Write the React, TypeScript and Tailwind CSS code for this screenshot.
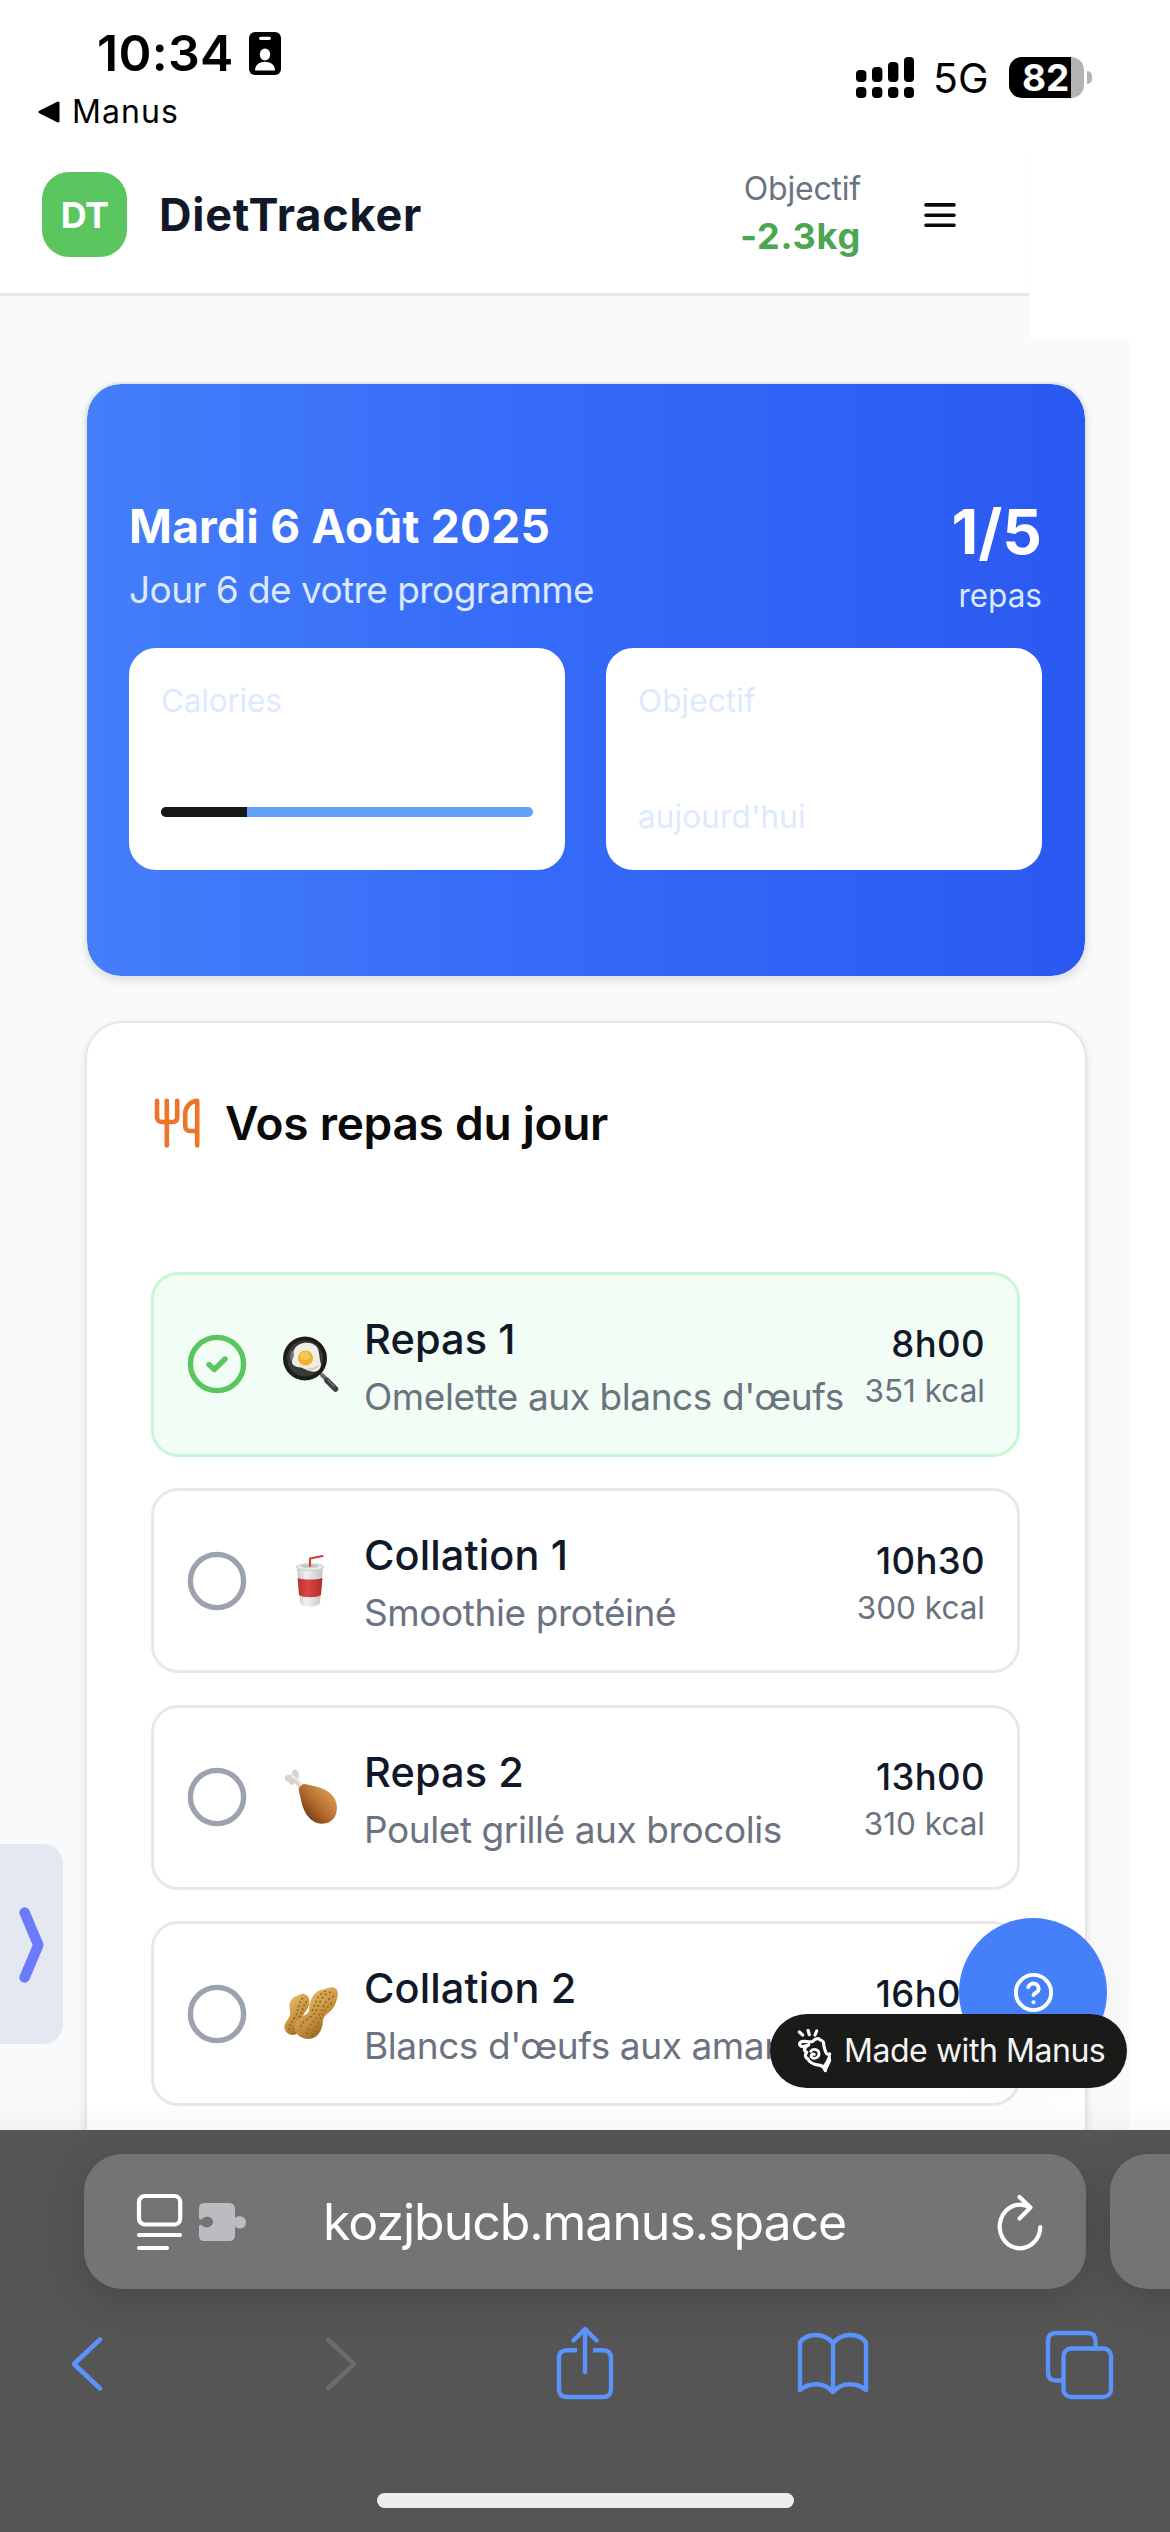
import React from "react";

function FriedEgg() {
  return (
    <svg viewBox="0 0 56 56" className="h-[56px] w-[56px]">
      <path d="M39 39 L44 44" stroke="#6b6b6b" strokeWidth="4" strokeLinecap="round" />
      <path d="M44 44.5 L52.5 53" stroke="#3f3f41" strokeWidth="5.5" strokeLinecap="round" />
      <path d="M45 44 L51 50.5" stroke="#77777a" strokeWidth="1.4" strokeLinecap="round" />
      <circle cx="22" cy="22.5" r="22" fill="#1c1c1c" />
      <circle cx="22" cy="22.5" r="18" fill="#3a3a3a" />
      <path d="M8 16 C6 22 8 26 12 28 L14 12Z" fill="#7c7478" />
      <path d="M11 14 C15 5 29 5 34 11 C37 17 36 22 38 28 C38 35 32 37 27 35 C22 34 20 31 14 31 C7 28 9 25 10 22 C12 19 10 18 11 14Z" fill="#eeeee2" />
      <path d="M13 28 C18 31 28 36 36 28 C34 35 28 35 24 33Z" fill="#cfd0c0" />
      <circle cx="22.5" cy="22" r="7.6" fill="#f0b031" />
      <ellipse cx="22" cy="20" rx="5" ry="4" fill="#f8c956" />
    </svg>
  );
}

function Cup() {
  return (
    <svg viewBox="0 0 56 56" className="h-[56px] w-[56px]">
      <defs>
        <linearGradient id="cupBody" x1="0" x2="1">
          <stop offset="0" stopColor="#c9c9c9" />
          <stop offset="0.35" stopColor="#f1f1f1" />
          <stop offset="1" stopColor="#c4c4c4" />
        </linearGradient>
        <linearGradient id="cupBand" x1="0" x2="1">
          <stop offset="0" stopColor="#b93230" />
          <stop offset="0.4" stopColor="#dd4541" />
          <stop offset="1" stopColor="#b22d2b" />
        </linearGradient>
      </defs>
      <path d="M14 15 L17 50 C17 54.5 37 54.5 37 50 L40 15Z" fill="url(#cupBody)" />
      <path d="M14.6 25 C20 27 34 27 39.4 25 L38 42 C34 45 20 45 16 42Z" fill="url(#cupBand)" />
      <ellipse cx="27" cy="14" rx="13.8" ry="3.4" fill="#e9e9e9" stroke="#cfcfcf" strokeWidth="1" />
      <ellipse cx="27" cy="13" rx="9" ry="1.8" fill="#c2c2c2" />
      <path d="M27 13 V5.5 L39.5 3" fill="none" stroke="#cf3a38" strokeWidth="2" strokeLinecap="round" strokeLinejoin="round" />
    </svg>
  );
}

function Drumstick() {
  return (
    <svg viewBox="0 0 56 56" className="h-[56px] w-[56px]">
      <defs>
        <linearGradient id="meat" x1="0.15" y1="0.85" x2="0.85" y2="0.2">
          <stop offset="0" stopColor="#6b3411" />
          <stop offset="0.45" stopColor="#b3692c" />
          <stop offset="1" stopColor="#d89a55" />
        </linearGradient>
      </defs>
      <path d="M2 8 C3 5 7 6 9 6 C8 2 11 0 13 1 C17 2 16 7 15 10 L21 16 L17 20 L12 14 C9 17 6 16 6 13 C3 12 1 11 2 8Z" fill="#d9d2c8" />
      <path d="M9 7 C12 8 14 11 19 16" fill="none" stroke="#f0ece5" strokeWidth="2" strokeLinecap="round" />
      <path d="M22 15 C30 17 41 18 48 25 C54 31 55 38 53 45 C50 54 41 56 34 54 C25 51 20 41 18 31 C17 25 15 21 16 19 C18 17 19 15 22 15Z" fill="url(#meat)" />
    </svg>
  );
}

function Peanuts() {
  return (
    <svg viewBox="0 0 56 56" className="h-[56px] w-[56px]">
      <defs>
        <linearGradient id="nut" x1="0.2" y1="0" x2="0.8" y2="1">
          <stop offset="0" stopColor="#ecc56f" />
          <stop offset="0.6" stopColor="#c28d3b" />
          <stop offset="1" stopColor="#7d5117" />
        </linearGradient>
      </defs>
      <path d="M21 8 C26 9 27 14 26 19 C25 24 20 27 19 33 C19 41 17 49 9 49 C3 48 0 43 2 38 C4 33 8 32 7 25 C5 18 8 11 14 10 C17 9 18 7 21 8Z" fill="url(#nut)" />
      <path d="M20 12 C14 18 16 25 12 31 C9 36 6 38 6 44 M24 15 C19 21 20 25 16 32 C13 38 11 41 11 46" fill="none" stroke="#8d6223" strokeWidth="1.6" strokeDasharray="2 2.2" />
      <path d="M52 2 C57 5 54 14 52 19 C48 27 42 27 40 34 C40 42 36 53 25 53 C15 52 9 45 12 37 C15 30 23 31 26 25 C26 15 30 6 38 4 C44 3 48 0 52 2Z" fill="url(#nut)" />
      <path d="M48 6 C37 9 36 20 32 27 C27 33 18 34 17 44 M51 10 C41 14 41 22 36 29 C31 36 25 39 23 49 M43 5 C33 9 33 18 29 25 M49 17 C42 23 41 27 37 33 C34 40 31 44 29 50" fill="none" stroke="#956a26" strokeWidth="1.7" strokeDasharray="2.2 2.4" />
    </svg>
  );
}

type Meal = {
  icon: React.ReactNode;
  title: string;
  description: string;
  time: string;
  kcal: string;
  done?: boolean;
};

const meals: Meal[] = [
  { icon: <FriedEgg />, title: "Repas 1", description: "Omelette aux blancs d'œufs", time: "8h00", kcal: "351 kcal", done: true },
  { icon: <Cup />, title: "Collation 1", description: "Smoothie protéiné", time: "10h30", kcal: "300 kcal" },
  { icon: <Drumstick />, title: "Repas 2", description: "Poulet grillé aux brocolis", time: "13h00", kcal: "310 kcal" },
  { icon: <Peanuts />, title: "Collation 2", description: "Blancs d'œufs aux amandes", time: "16h00", kcal: "" },
];

function StatusCircle({ done }: { done?: boolean }) {
  return (
    <svg viewBox="0 0 60 60" className="h-[60px] w-[60px] shrink-0" fill="none" strokeLinecap="round" strokeLinejoin="round">
      <circle cx="30" cy="30" r="26.6" stroke={done ? "#5bc65f" : "#9ca3af"} strokeWidth="5.4" />
      {done && <path d="M22 30.5 L27.3 35.5 L38 25" stroke="#5bc65f" strokeWidth="5.4" />}
    </svg>
  );
}

function MealRow({ meal }: { meal: Meal }) {
  return (
    <div
      className={
        "flex h-[185px] items-center rounded-[27px] border-[3px] pl-[33px] pr-[32px] " +
        (meal.done ? "border-[#c8f7d6] bg-[#f2fdf5]" : "border-[#e8e8ec] bg-white")
      }
    >
      <StatusCircle done={meal.done} />
      <div className="ml-[36px] shrink-0">{meal.icon}</div>
      <div className="ml-[25px] min-w-0 flex-1 whitespace-nowrap">
        <p className="text-[41.5px] leading-[64px] font-medium tracking-[0.1px] text-[#111827]">{meal.title}</p>
        <p className="text-[37px] leading-[51px] tracking-[-0.42px] text-[#6b7280]">{meal.description}</p>
      </div>
      <div className="shrink-0 pt-[2px] text-right whitespace-nowrap">
        <p className="text-[36.5px] leading-[52px] font-medium tracking-[0.4px] text-[#111827]">{meal.time}</p>
        <p className="h-[42px] text-[31.5px] leading-[42px] tracking-[0px] text-[#6b7280]">{meal.kcal}</p>
      </div>
    </div>
  );
}

function StatusBar() {
  return (
    <div className="flex h-[154px] justify-between">
      <div className="flex flex-col">
        <div className="mt-[22px] flex h-[62px] items-center pl-[97px]">
          <span className="w-[152px] text-[50px] leading-[62px] font-semibold tracking-[0.3px] text-black">10:34</span>
          <svg viewBox="0 0 33 43" className="h-[43px] w-[33px]">
            <rect width="32" height="43" rx="6" fill="#000" />
            <rect x="10" y="4.7" width="12" height="3.2" rx="1.6" fill="#fff" />
            <ellipse cx="16" cy="22.5" rx="5.2" ry="6" fill="#fff" />
            <path d="M6 38.5 C6 32.5 11 29.8 16 29.8 S26 32.5 26 38.5Z" fill="#fff" />
          </svg>
        </div>
        <div className="mt-[6px] flex h-[44px] items-center pl-[37px]">
          <svg viewBox="0 0 24 24" className="h-[24px] w-[24px]">
            <path d="M3 12 L21 3 V21Z" fill="#000" stroke="#000" strokeWidth="3" strokeLinejoin="round" />
          </svg>
          <span className="ml-[11px] text-[32px] leading-[44px] tracking-[1.07px] text-black">Manus</span>
        </div>
      </div>
      <div className="mt-[57px] flex h-[41px] items-center pr-[78px]">
        <svg viewBox="0 0 58 41" className="h-[41px] w-[58px]" fill="#000">
          <rect x="0" y="13" width="10.4" height="12" rx="4" />
          <rect x="16" y="10" width="10.4" height="15" rx="4" />
          <rect x="32" y="5" width="10.4" height="20" rx="4" />
          <rect x="48" y="0" width="10" height="25" rx="4" />
          <rect x="0" y="30" width="10.4" height="11" rx="4" />
          <rect x="16" y="30" width="10.4" height="11" rx="4" />
          <rect x="32" y="30" width="10.4" height="11" rx="4" />
          <rect x="48" y="30" width="10" height="11" rx="4" />
        </svg>
        <span className="ml-[19px] w-[76px] pt-[2px] text-[41px] leading-[41px] text-black">5G</span>
        <div className="h-[41px] w-[75px] rounded-[13px] bg-linear-to-r from-black from-[62px] to-[#b3b3b3] to-[62px] pl-[13px] text-[37px] leading-[41px] font-bold text-white">
          82
        </div>
        <div className="ml-[3px] h-[13px] w-[5px] rounded-r-full bg-[#b3b3b3]" />
      </div>
    </div>
  );
}

function AppHeader() {
  return (
    <header className="flex h-[142px] w-[1030px] items-center border-r border-b-[3px] border-r-[#fafafa] border-b-[#e5e7eb] pb-[18px] pl-[42px]">
      <div className="flex h-[85px] w-[85px] items-center justify-center rounded-[27px] bg-[#5bc65f] text-[36px] font-bold tracking-[-0.8px] text-white">
        DT
      </div>
      <h1 className="ml-[32px] text-[45px] leading-[60px] font-bold tracking-[0.78px] text-[#111827]">DietTracker</h1>
      <div className="ml-auto text-right">
        <p className="text-[32px] leading-[43px] tracking-[-0.2px] text-[#6b7280]">Objectif</p>
        <p className="text-[36px] leading-[52px] font-bold tracking-[0.8px] text-[#4aa74f]">-2.3kg</p>
      </div>
      <svg viewBox="0 0 32 24" className="mr-[73px] ml-[63px] h-[24px] w-[32px]" stroke="#0a0a0a" strokeWidth="3.6" strokeLinecap="round">
        <path d="M2 1.9 H30 M2 12.3 H30 M2 22.2 H30" />
      </svg>
    </header>
  );
}

function SummaryCard() {
  return (
    <section className="h-[596px] rounded-[36px] border-2 border-[#e5e5e5] bg-linear-to-r from-[#447ef9] via-[#366af8] via-45% to-[#2a59f1] bg-clip-padding pt-[109px] pr-[43px] pl-[42px] shadow-[0_3px_8px_rgba(0,0,0,0.1)]">
      <div className="flex h-[128px] justify-between">
        <div>
          <h2 className="text-[46px] leading-[66px] font-bold tracking-[0.27px] text-white">Mardi 6 Août 2025</h2>
          <p className="text-[37px] leading-[62px] tracking-[-0.56px] text-[#dbe8fe]">Jour 6 de votre programme</p>
        </div>
        <div className="text-right">
          <p className="text-[62px] leading-[78px] font-bold text-white">1/5</p>
          <p className="text-[31.5px] leading-[50px] text-[#dbe8fe]">repas</p>
        </div>
      </div>
      <div className="mt-[27px] grid grid-cols-2 gap-[41px]">
        <div className="flex h-[222px] flex-col rounded-[27px] bg-white px-[32px] pt-[31px]">
          <p className="text-[31.5px] leading-[43px] tracking-[-0.2px] text-[#dde9fd]">Calories</p>
          <div className="mt-[85px] h-[10px] overflow-hidden rounded-full bg-[#62a0f9]">
            <div className="h-full w-[23%] bg-[#171717]" />
          </div>
        </div>
        <div className="flex h-[222px] flex-col rounded-[27px] bg-white px-[32px] pt-[31px]">
          <p className="text-[31.5px] leading-[43px] tracking-[0.1px] text-[#dde9fd]">Objectif</p>
          <p className="mt-[73px] text-[31.5px] leading-[43px] tracking-[0.12px] text-[#dde9fd]">aujourd'hui</p>
        </div>
      </div>
    </section>
  );
}

function MealsCard() {
  return (
    <section className="mt-[43px] h-[1250px] rounded-[38px] border-2 border-[#e5e5e5] bg-white pt-[67px] pr-[65px] pl-[64px] shadow-[0_3px_8px_rgba(0,0,0,0.1)]">
      <div className="flex h-[66px] items-center">
        <svg viewBox="0 0 46 50" className="ml-[3px] h-[50px] w-[46px]" fill="none" stroke="#ee742c" strokeWidth="4.6" strokeLinecap="round" strokeLinejoin="round">
          <path d="M3 2.8 V19 C3 22 5 24 8 24 H19 C22 24 23.2 22 23.2 19 V2.8" />
          <path d="M12.8 2.8 V47.5" />
          <path d="M43.2 47.5 V2.8 C36 3.5 31.2 9 31.2 16 V28 C31.2 31 33 33 36 33 H43.2" />
        </svg>
        <h2 className="ml-[25px] text-[46px] leading-[66px] font-semibold tracking-[-0.26px] text-[#0a0a0a]">Vos repas du jour</h2>
      </div>
      <div className="mt-[115.5px] flex flex-col gap-[31.5px]">
        {meals.map((meal) => (
          <MealRow key={meal.title} meal={meal} />
        ))}
      </div>
    </section>
  );
}

function FloatingControls() {
  return (
    <>
      <div className="absolute top-[1844px] left-0 flex h-[200px] w-[63px] items-center rounded-r-[20px] bg-[#e4e9f1]">
        <svg viewBox="0 0 30 80" className="mt-[2px] ml-[17px] h-[80px] w-[30px]" fill="none" stroke="#6b7bfa" strokeWidth="10.5" strokeLinecap="round" strokeLinejoin="round">
          <path d="M7.6 7.5 L21.3 40 L7.6 72.5" />
        </svg>
      </div>
      <div className="absolute top-[1918px] left-[959px] flex h-[148px] w-[148px] items-center justify-center rounded-full bg-[#467ffa] shadow-[0_20px_40px_rgba(0,0,0,0.06)]">
        <svg viewBox="0 0 24 24" className="h-[47px] w-[47px]" fill="none" stroke="#fff" strokeWidth="2" strokeLinecap="round" strokeLinejoin="round">
          <circle cx="12" cy="12" r="9" />
          <path d="M9.3 9.3a2.75 2.75 0 0 1 5.35.9c0 1.8-2.65 2.3-2.65 3.1" />
          <path d="M12 17h.01" />
        </svg>
      </div>
      <div className="absolute top-[2014px] left-[770px] flex h-[74px] w-[357px] items-center rounded-full bg-[#1a1a19] pl-[26px]">
        <svg viewBox="48 57 111 132" className="h-[44px] w-[37px] shrink-0" fill="none" stroke="#fff" strokeWidth="9.5" strokeLinecap="round" strokeLinejoin="round">
          <path d="M58 66 L68 75 M84 61 L88 74 M110 63 L105 75" />
          <path d="M86 105 C76 109 66 114 60 106 C56 98 64 94 72 94 C82 94 90 98 98 94 C106 86 112 82 119 88 C125 94 130 90 131 99 C130 108 134 116 137 126 C139 132 144 134 149 132" />
          <path d="M78 111 C71 117 72 124 80 127 C73 135 76 143 84 147 C88 158 104 164 120 166 C127 168 132 172 136 182" />
          <path d="M92 124 C100 114 116 118 117 130 C118 142 104 148 96 143 C90 137 96 130 103 133" strokeWidth="8.5" />
          <path d="M149 132 L151 152 L137 183 L130 168 C138 160 144 148 149 132Z" fill="#fff" strokeWidth="5" />
        </svg>
        <span className="ml-[11px] text-[32px] leading-[74px] tracking-[-0.45px] whitespace-nowrap text-[#f4f4f4]">Made with Manus</span>
      </div>
    </>
  );
}

function BrowserToolbar() {
  return (
    <footer className="h-[402px] w-full overflow-hidden bg-[#555]">
      <div className="flex pt-[24px] pl-[84px]">
        <div className="flex h-[135px] w-[1002px] shrink-0 items-center rounded-[38px] bg-[#747474] pl-[51px] shadow-[0_10px_40px_rgba(0,0,0,0.16)]">
          <svg viewBox="0 0 49 58" className="h-[58px] w-[49px]" fill="none" stroke="#fff" strokeWidth="4.2" strokeLinecap="round">
            <rect x="4" y="3" width="41.2" height="28.5" rx="6" />
            <path d="M4 42 H45 M4 55 H32" />
          </svg>
          <svg viewBox="0 0 48 40" className="ml-[14px] h-[40px] w-[48px]" fill="#bbbbc2">
            <path d="M6 1 H31 Q37 1 37 7 V16.2 C40 12.8 48 14 48 20.5 C48 27 40 28 37 24.6 V33 Q37 39 31 39 H6 Q1 39 1 33 V25 C1 22.5 2.6 22 4.5 24 C9 27 15 24.5 15 20 C15 15.5 9 13 4.5 16.5 C2.6 18.5 1 18 1 15.5 V7 Q1 1 6 1Z" />
          </svg>
          <span className="ml-[77px] w-[600px] text-[50px] leading-[62px] tracking-[-1.05px] text-white">kozjbucb.manus.space</span>
          <svg viewBox="0 0 46 58" className="ml-[74px] h-[58px] w-[46px] shrink-0" fill="none" stroke="#fff" strokeWidth="4.2" strokeLinecap="round" strokeLinejoin="round">
            <path d="M43.3 34 A20.3 21.8 0 1 1 33 14.5" />
            <path d="M22.5 4 L33.5 14.5 L22.5 25.5" />
          </svg>
        </div>
        <div className="ml-[24px] h-[135px] w-[120px] shrink-0 rounded-[38px] bg-[#747474] shadow-[0_10px_40px_rgba(0,0,0,0.16)]" />
      </div>
      <div className="flex h-[150px] items-center">
        <svg viewBox="0 0 36 60" className="ml-[69px] h-[60px] w-[36px]" fill="none" stroke="#5a93fb" strokeWidth="4.6" strokeLinecap="round" strokeLinejoin="round">
          <path d="M31 5.5 L5 30 L31 54.5" />
        </svg>
        <svg viewBox="0 0 36 60" className="ml-[218px] h-[60px] w-[36px]" fill="none" stroke="#6c6c6c" strokeWidth="4.6" strokeLinecap="round" strokeLinejoin="round">
          <path d="M5 5.5 L31 30 L5 54.5" />
        </svg>
        <svg viewBox="0 0 60 76" className="ml-[196px] h-[76px] w-[60px]" fill="none" stroke="#5a93fb" strokeWidth="4.4" strokeLinecap="round" strokeLinejoin="round">
          <path d="M22 24.3 H12 Q4 24.3 4 32.3 V63 Q4 71 12 71 H48 Q56 71 56 63 V32.3 Q56 24.3 48 24.3 H38" strokeLinecap="butt" />
          <path d="M30 46 V3 M18.5 14.5 L30 3 L41.5 14.5" />
        </svg>
        <svg viewBox="0 0 76 64" className="ml-[180px] h-[64px] w-[76px]" fill="none" stroke="#5a93fb" strokeWidth="4.4" strokeLinecap="round" strokeLinejoin="round">
          <path d="M38 60 V11 C33 5.5 27 3 21 3 C14 3 8 6 5 10.5 V58 C14 50.5 29 49.5 38 60 C47 49.5 62 50.5 71 58 V10.5 C68 6 62 3 55 3 C49 3 43 5.5 38 11" />
        </svg>
        <svg viewBox="0 0 70 72" className="ml-[173px] h-[72px] w-[70px] shrink-0" fill="none" stroke="#5a93fb" strokeWidth="4.4">
          <rect x="19.5" y="20.5" width="47.5" height="48.5" rx="7.5" />
          <path d="M19.5 52.5 H12 Q4 52.5 4 44.5 V13 Q4 5 12 5 H43.5 Q51.5 5 51.5 13 V20" />
        </svg>
      </div>
      <div className="mx-auto mt-[54px] h-[15px] w-[417px] rounded-full bg-[#eee]" />
    </footer>
  );
}

export default function App() {
  return (
    <div className="relative flex h-[2532px] w-[1170px] flex-col overflow-hidden bg-white font-['Inter',sans-serif]">
      <div className="relative h-[2130px] shrink-0 overflow-hidden">
        <StatusBar />
        <AppHeader />
        <div className="h-[43px] w-[1030px] bg-[#f9fafc]" />
        <main className="w-[1129px] bg-[#f9fafc] pt-[43px] pr-[42px] pl-[85px]">
          <SummaryCard />
          <MealsCard />
        </main>
        <FloatingControls />
        <div className="absolute bottom-0 left-0 h-[30px] w-full bg-linear-to-b from-transparent to-black/3" />
      </div>
      <BrowserToolbar />
    </div>
  );
}
